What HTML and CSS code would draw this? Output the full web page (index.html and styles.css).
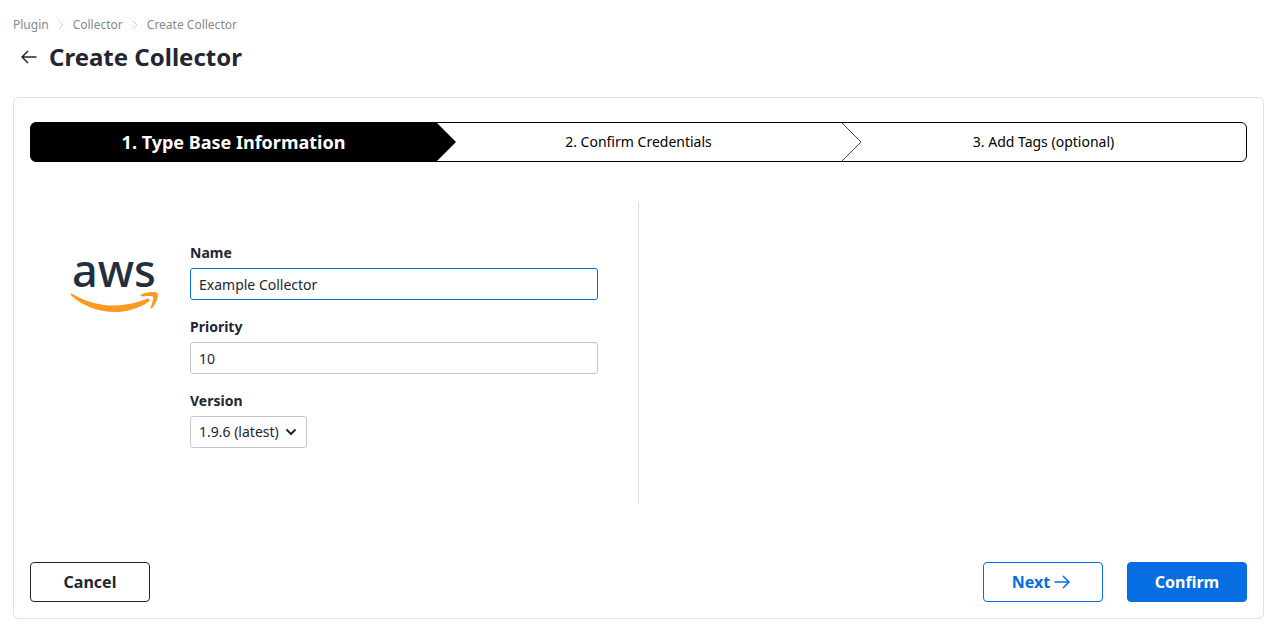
FILE: index.html
```html
<!DOCTYPE html>
<html lang="en">
<head>
<meta charset="utf-8">
<meta name="viewport" content="width=device-width, initial-scale=1">
<title>Create Collector</title>
<link rel="stylesheet" href="styles.css">
</head>
<body>
<main class="page">
  <nav class="breadcrumb" aria-label="Breadcrumb">
    <a href="#">Plugin</a>
    <svg class="separator" viewBox="0 0 8 10" aria-hidden="true"><path d="M2 1l4 4-4 4"/></svg>
    <a href="#">Collector</a>
    <svg class="separator" viewBox="0 0 8 10" aria-hidden="true"><path d="M2 1l4 4-4 4"/></svg>
    <a href="#" aria-current="page">Create Collector</a>
  </nav>
  <header class="heading">
    <button class="back" type="button" aria-label="Back">
      <svg viewBox="0 0 16 14" aria-hidden="true"><path d="M15.500 7H1M7 1L1 7l6 6"/></svg>
    </button>
    <h1>Create Collector</h1>
  </header>
  <form class="panel">
    <ol class="steps">
      <li class="step active" aria-current="step">1. Type Base Information
        <svg class="arrow filled" viewBox="0 0 21 38" aria-hidden="true"><path d="M0 0h1L20 19 1 38H0z"/></svg>
      </li>
      <li class="step">2. Confirm Credentials
        <svg class="arrow" viewBox="0 0 21 38" aria-hidden="true"><path d="M1 0L20 19 1 38"/></svg>
      </li>
      <li class="step">3. Add Tags (optional)</li>
    </ol>
    <div class="content">
      <section class="base">
        <svg class="logo" viewBox="0 0 88 64" role="img" aria-label="aws">
          <text class="logo-name" x="44" y="37" text-anchor="middle">aws</text>
          <path class="logo-smile" d="M.500 44.800C.300 43.500 1.300 43.200 2.500 43.900C14 51 29 55.500 44 55.500C55 55.500 66 53.300 76.500 49C79 48 80.500 50.200 78.500 51.700C69 58.500 56 62 44.500 62C28 62 12 56 .500 44.800z"/>
          <path class="logo-smile" d="M71 44.800C75.500 41.500 86 41.200 87.300 43C88.700 45 86.800 53.800 82 58.300C81 59.200 80.100 58.700 80.600 57.500C82 54.200 84 48.200 83 46.800C82 45.500 75.500 46.100 72.300 46.500C70.800 46.700 70.100 45.700 71 44.800z"/>
        </svg>
        <div class="fields">
          <div class="field">
            <label for="name">Name</label>
            <input class="control focused" id="name" type="text" value="Example Collector">
          </div>
          <div class="field">
            <label for="priority">Priority</label>
            <input class="control" id="priority" type="text" inputmode="numeric" value="10">
          </div>
          <div class="field">
            <label for="version">Version</label>
            <div class="select-box">
              <select class="control" id="version"><option>1.9.6 (latest)</option></select>
              <svg class="chevron" viewBox="0 0 12 8" aria-hidden="true"><path d="M1.500 1.500L6 6l4.500-4.500"/></svg>
            </div>
          </div>
        </div>
      </section>
      <section class="details"></section>
    </div>
    <footer class="actions">
      <button class="button cancel" type="button">Cancel</button>
      <button class="button next" type="button">Next
        <svg viewBox="0 0 20 14" aria-hidden="true"><path d="M.500 7H15M9 1l6 6-6 6"/></svg>
      </button>
      <button class="button confirm" type="submit">Confirm</button>
    </footer>
  </form>
</main>
</body>
</html>
```

FILE: styles.css
```css
* { box-sizing: border-box; }
body {
  margin: 0;
  background: #fff;
  color: #232533;
  font: 14px/20px "Noto Sans", sans-serif;
}
svg { fill: none; stroke: currentColor; }
button, input, select { font: inherit; color: inherit; }
.page { padding: 16px 15px 23px 13px; }
.breadcrumb {
  display: flex;
  align-items: center;
  gap: 8px;
  font-size: 12px;
  line-height: 17px;
}
.breadcrumb a { color: #858895; text-decoration: none; }
.separator { width: 8px; height: 10px; color: #d0d0d4; }
.heading {
  display: flex;
  align-items: center;
  gap: 4px;
  margin: 8px 0 24px;
}
.heading h1 { margin: 0; font-size: 24px; line-height: 32px; font-weight: 700; }
.back {
  display: grid;
  place-items: center;
  width: 32px;
  height: 32px;
  padding: 0;
  border: 0;
  background: none;
}
.back svg { width: 16px; height: 14px; stroke-width: 1.5; }
.panel {
  padding: 24px 16px 16px;
  border: 1px solid #e1e1e4;
  border-radius: 6px;
}
.steps {
  display: grid;
  grid-template-columns: repeat(3, 1fr);
  height: 40px;
  margin: 0;
  padding: 0;
  border: 1px solid #000;
  border-radius: 6px;
  color: #000;
  list-style: none;
}
.step {
  position: relative;
  display: flex;
  align-items: center;
  justify-content: center;
}
.active {
  background: #000;
  border-radius: 4px 0 0 4px;
  color: #fff;
  font-size: 18px;
  font-weight: 700;
}
.arrow {
  position: absolute;
  z-index: 1;
  top: 0;
  left: 100%;
  width: 21px;
  height: 38px;
  color: #444;
}
.filled { fill: #000; stroke: none; }
.content {
  display: grid;
  grid-template-columns: 1fr 1fr;
  margin: 40px 0 58px;
}
.base {
  display: grid;
  grid-template-columns: 88px 1fr;
  gap: 32px;
  padding: 40px 40px 56px;
  border-right: 1px solid #dddddf;
}
.logo { width: 88px; height: 64px; margin-top: 8px; stroke: none; }
.logo-name { fill: #242f3e; font-size: 45px; line-height: 64px; font-weight: 500; }
.logo-smile { fill: #ff9920; }
.fields { display: grid; gap: 16px; }
.field { display: grid; gap: 4px; justify-items: start; }
.field label { line-height: 22px; font-weight: 700; }
.control {
  width: 100%;
  height: 32px;
  padding: 0 8px;
  border: 1px solid #c5c6d0;
  border-radius: 3px;
  background: #fff;
  outline: none;
}
.focused, .control:focus { border-color: #066ee0; }
.select-box { position: relative; }
.select-box .control { appearance: none; padding-right: 27px; }
.chevron {
  position: absolute;
  top: 12px;
  right: 10px;
  width: 12px;
  height: 8px;
  stroke-width: 2;
  pointer-events: none;
}
.actions { display: flex; gap: 24px; }
.button {
  display: flex;
  align-items: center;
  justify-content: center;
  gap: 4px;
  width: 120px;
  height: 40px;
  padding: 0;
  border: 1px solid currentColor;
  border-radius: 4px;
  background: #fff;
  font-size: 16px;
  font-weight: 700;
}
.button svg { width: 20px; height: 14px; stroke-width: 1.5; }
.cancel { margin-right: auto; }
.next { color: #066ee0; }
.confirm { border-color: #066ee0; background: #066ee0; color: #fff; }
```
